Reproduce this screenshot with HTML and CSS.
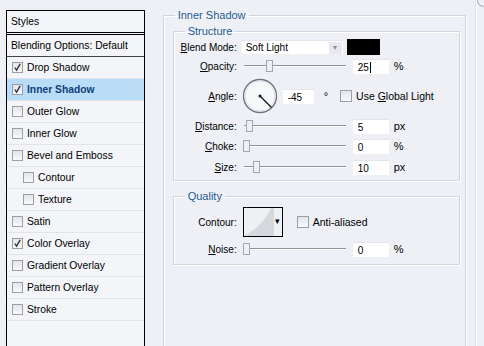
FILE: index.html
```html
<!DOCTYPE html>
<html lang="en">
<head>
  <meta charset="UTF-8">
  <title>Layer Style - Inner Shadow</title>
  <link rel="stylesheet" href="styles.css">
</head>
<body>
  <div class="styles-list">
    <div class="list-head">Styles</div>
    <div class="list-row blend">Blending Options: Default</div>
    <div class="list-row"><span class="check on"><svg viewBox="0 0 10 10"><path d="M2 5 L4 8 L8 1"/></svg></span>Drop Shadow</div>
    <div class="list-row active"><span class="check on"><svg viewBox="0 0 10 10"><path d="M2 5 L4 8 L8 1"/></svg></span>Inner Shadow</div>
    <div class="list-row"><span class="check"></span>Outer Glow</div>
    <div class="list-row"><span class="check"></span>Inner Glow</div>
    <div class="list-row"><span class="check"></span>Bevel and Emboss</div>
    <div class="list-row sub"><span class="check"></span>Contour</div>
    <div class="list-row sub"><span class="check"></span>Texture</div>
    <div class="list-row"><span class="check"></span>Satin</div>
    <div class="list-row"><span class="check on"><svg viewBox="0 0 10 10"><path d="M2 5 L4 8 L8 1"/></svg></span>Color Overlay</div>
    <div class="list-row"><span class="check"></span>Gradient Overlay</div>
    <div class="list-row"><span class="check"></span>Pattern Overlay</div>
    <div class="list-row"><span class="check"></span>Stroke</div>
  </div>

  <div class="options">
    <fieldset class="group outer">
      <legend>Inner Shadow</legend>

      <fieldset class="group structure">
        <legend>Structure</legend>

        <div class="row r-blend">
          <label class="label"><u>B</u>lend Mode:</label>
          <div class="select">Soft Light<span class="select-btn">&#9662;</span></div>
          <div class="swatch"></div>
        </div>

        <div class="row r-opacity">
          <label class="label"><u>O</u>pacity:</label>
          <div class="track"><span class="thumb" style="left: 22px"></span></div>
          <div class="field">25<span class="caret"></span></div>
          <span class="unit">%</span>
        </div>

        <div class="row r-angle">
          <label class="label"><u>A</u>ngle:</label>
          <svg class="dial" viewBox="0 0 36 36" width="36" height="36">
            <circle cx="18" cy="18" r="16.5" fill="#f7f8fa" stroke="#6f7680" stroke-width="1.4"/>
            <circle cx="18" cy="18" r="15" fill="none" stroke="#dde0e6" stroke-width="1"/>
            <line x1="18" y1="18" x2="29.5" y2="29.5" stroke="#111" stroke-width="1.2"/>
            <circle cx="18" cy="18" r="1.5" fill="#111"/>
          </svg>
          <div class="field angle-field">-45</div>
          <span class="deg">&deg;</span>
          <span class="check big"></span>
          <span class="opt-text">Use <u>G</u>lobal Light</span>
        </div>

        <div class="row r-distance">
          <label class="label"><u>D</u>istance:</label>
          <div class="track"><span class="thumb" style="left: 2px"></span></div>
          <div class="field">5</div>
          <span class="unit">px</span>
        </div>

        <div class="row r-choke">
          <label class="label"><u>C</u>hoke:</label>
          <div class="track"><span class="thumb" style="left: -1px"></span></div>
          <div class="field">0</div>
          <span class="unit">%</span>
        </div>

        <div class="row r-size">
          <label class="label"><u>S</u>ize:</label>
          <div class="track"><span class="thumb" style="left: 9px"></span></div>
          <div class="field">10</div>
          <span class="unit">px</span>
        </div>
      </fieldset>

      <fieldset class="group quality">
        <legend>Quality</legend>

        <div class="row r-contour">
          <label class="label">Contour:</label>
          <div class="contour">
            <svg viewBox="0 0 30 28" width="30" height="28">
              <rect width="30" height="28" fill="#eef0f3"/>
              <path d="M0 28 C12 22 22 12 27 0 L30 0 L30 28 Z" fill="#d5d8dd"/>
            </svg>
            <span class="contour-btn">&#9662;</span>
          </div>
          <span class="check big"></span>
          <span class="opt-text">Anti-aliased</span>
        </div>

        <div class="row r-noise">
          <label class="label"><u>N</u>oise:</label>
          <div class="track"><span class="thumb" style="left: -1px"></span></div>
          <div class="field">0</div>
          <span class="unit">%</span>
        </div>
      </fieldset>
    </fieldset>
  </div>

  <div class="edge"><span class="knob"></span></div>
</body>
</html>
```

FILE: styles.css
```css
body { margin: 0; height: 346px; overflow: hidden; display: flex; background: #eef0f5; font-family: "Liberation Sans", Arial, sans-serif; font-size: 10px; color: #000; }

/* left list */
.styles-list { margin: 10px 0 0 6px; width: 139px; height: 336px; box-sizing: border-box; border: 1px solid #000; border-bottom: none; background: #f4f5f9; font-size: 10.3px; }
.list-head { height: 21px; line-height: 21px; padding-left: 4px; border-bottom: 3px double #000; }
.list-row { display: flex; align-items: center; height: 21px; padding-left: 5px; border-bottom: 1px solid #e2e4ea; }
.list-row.blend { padding-left: 4px; border-bottom-color: #444; }
.list-row.sub { padding-left: 16px; }
.list-row.active { background: #b9ddf8; font-weight: bold; color: #0f3f7a; }

.check { display: inline-flex; align-items: center; justify-content: center; width: 9px; height: 9px; margin-right: 4px; border: 1px solid #9a9fa8; background: linear-gradient(#e3e5ea, #f8f9fb); flex: none; }
.check svg { width: 9px; height: 9px; fill: none; stroke: #2b3442; stroke-width: 1.5; }
.check.big { width: 10px; height: 10px; }

/* right options */
.options { margin-left: 18px; width: 304px; }
.group { margin: 0; padding: 0; border: 1px solid #d2d5dc; box-shadow: inset 1px 1px 0 #fff, 1px 1px 0 #fff; }
.group legend { padding: 0 3px; line-height: 13px; font-size: 11px; color: #1f5a93; }
.outer { margin-top: 8px; height: 338px; box-sizing: border-box; border-bottom: none; padding: 0 5px 0 9px; }
.outer > legend { margin-left: 2px; line-height: 14px; }
.structure { margin-top: 3px; padding-bottom: 4px; }
.structure legend, .quality legend { margin-left: 11px; }
.quality { margin-top: 9px; padding-bottom: 6px; }

.row { display: flex; align-items: center; height: 18px; }
.label { width: 63px; margin-right: 7px; text-align: right; flex: none; }
.r-opacity { margin-top: 1px; }
.r-angle { margin-top: 2px; height: 38px; }
.r-distance, .r-choke { margin-top: 2px; }
.r-size { margin-top: 3px; }
.r-contour { margin-top: 4px; height: 30px; }
.r-noise { margin-top: 3px; }

.select { position: relative; width: 101px; height: 14px; margin-left: -2px; line-height: 14px; padding-left: 4px; box-sizing: border-box; background: #fff; border-top: 1px solid #e4e6eb; }
.select-btn { position: absolute; right: 1px; top: 1px; width: 13px; height: 12px; line-height: 12px; text-align: center; font-size: 8px; color: #8a8f98; background: #e7e9ee; }
.swatch { width: 33px; height: 16px; margin-left: 4px; background: #000; }

.track { position: relative; width: 102px; height: 12px; margin-right: 7px; }
.track::before { content: ""; position: absolute; left: 0; right: 0; top: 5px; height: 1px; background: #8e939b; box-shadow: 0 1px 0 #fff; }
.thumb { position: absolute; top: 0; width: 5px; height: 10px; border: 1px solid #a3a8b0; background: #eef0f3; }

.field { width: 36px; height: 15px; line-height: 15px; padding-left: 5px; box-sizing: border-box; background: #fff; border-top: 1px solid #e3e5ea; }
.caret { display: inline-block; width: 1px; height: 11px; margin-left: 1px; vertical-align: -2px; background: #000; }
.unit { margin-left: 5px; font-size: 11px; }

.dial { margin-left: -2px; flex: none; }
.angle-field { width: 31px; margin-left: 5px; }
.deg { margin-left: 10px; margin-right: 12px; font-size: 11px; }
.opt-text { font-size: 10.5px; }

.contour { display: flex; width: 40px; height: 30px; margin-left: -1px; box-sizing: border-box; border: 1px solid #000; background: #eef0f3; }
.contour svg { display: block; }
.contour-btn { flex: 1; text-align: center; line-height: 26px; font-size: 9px; color: #000; }
.r-contour .check { margin-left: 14px; }

.edge { position: relative; margin-left: 9px; width: 8px; border-left: 1px solid #dcdfe5; box-shadow: inset 1px 0 0 #fff; }
.knob { position: absolute; right: -6px; top: -6px; width: 11px; height: 11px; border: 1px solid #9aa0a8; border-radius: 50%; }
```
